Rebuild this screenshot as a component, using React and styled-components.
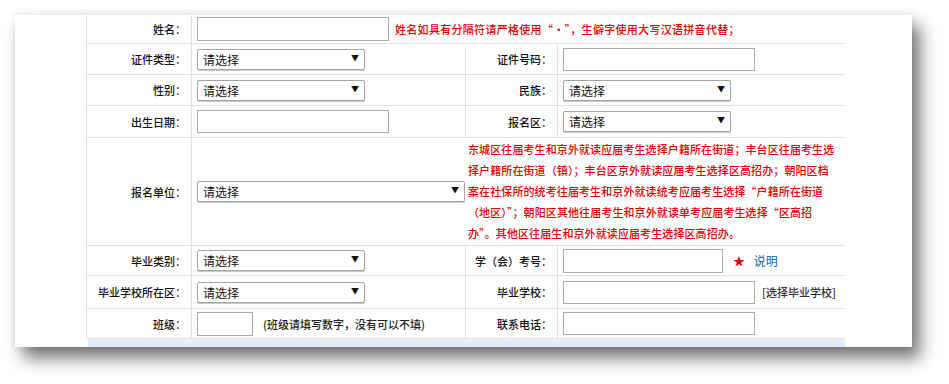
import React from 'react';
import styled, { createGlobalStyle } from 'styled-components';

const Global = createGlobalStyle`
  html, body {
    margin: 0;
    padding: 0;
    background: #ffffff;
  }
  body {
    font-family: "Noto Sans CJK SC", "Liberation Sans", sans-serif;
    color: #222;
  }
  #root {
    padding: 15px 0 40px 15px;
  }
`;

const Card = styled.div`
  width: 897px;
  height: 332px;
  background: #fff;
  box-sizing: border-box;
  padding: 0 67px 0 71px;
  overflow: hidden;
  box-shadow: 8px 11px 16px rgba(0, 0, 0, 0.55), 0 0 8px rgba(0, 0, 0, 0.07);
`;

const Grid = styled.div`
  display: grid;
  grid-template-columns: 105px 274px 92px 288px;
  grid-template-rows: 29px 31px 31px 32px 108px 30px 33px 30px;
`;

const Label = styled.div`
  box-sizing: border-box;
  display: flex;
  align-items: center;
  justify-content: flex-end;
  padding-right: 5px;
  border-left: 1px solid #e2e2e2;
  border-bottom: 1px solid #e2e2e2;
  font-size: 11px;
  font-weight: 500;
  color: #111;
  white-space: nowrap;
`;

const Field = styled.div`
  box-sizing: border-box;
  display: flex;
  align-items: center;
  gap: ${(p) => p.$gap || 6}px;
  padding-left: 5px;
  border-left: 1px solid #e2e2e2;
  border-bottom: 1px solid #e2e2e2;
  grid-column: ${(p) => (p.$span ? `span ${p.$span}` : 'auto')};
  white-space: nowrap;
`;

const NoteCell = styled.div`
  box-sizing: border-box;
  padding: 1px 0 0 3px;
  border-bottom: 1px solid #e2e2e2;
  grid-column: span 2;
  font-size: 11px;
  font-weight: 500;
  line-height: 21px;
  letter-spacing: 0.1px;
  color: #e60000;
  white-space: nowrap;
`;

const TextBox = styled.div`
  box-sizing: border-box;
  width: ${(p) => p.$w}px;
  height: ${(p) => p.$h || 23}px;
  border: 1px solid #aaa;
  background: #fff;
  flex: none;
`;

const Select = styled.div`
  box-sizing: border-box;
  width: ${(p) => p.$w}px;
  height: 21px;
  border: 1px solid #a4a4a4;
  border-radius: 2px;
  box-shadow: 0 1px 0 #c8c8c8;
  background: #fff;
  display: flex;
  align-items: flex-end;
  justify-content: space-between;
  padding: 0 5px 1px 5px;
  font-size: 12px;
  line-height: 16px;
  color: #111;
  flex: none;
`;

const Arrow = styled.span`
  align-self: center;
  font-size: 8px;
  line-height: 8px;
  color: #111;
  margin-top: -2px;
`;

const Hint = styled.span`
  font-size: 11px;
  font-weight: 500;
  letter-spacing: ${(p) => p.$ls || 0}px;
  color: ${(p) => p.$color || '#222'};
`;

const Star = styled.span`
  color: #e60000;
  font-size: 12px;
  margin-left: 4px;
`;

const Link = styled.span`
  color: #1a5c9e;
  font-size: 12px;
`;

const Strip = styled.div`
  height: 8px;
  margin-left: 2px;
  background: linear-gradient(#eaf2fc, #dce9f8);
`;

const SelectBox = ({ w }) => (
  <Select $w={w}>
    <span>请选择</span>
    <Arrow>▼</Arrow>
  </Select>
);

const App = () => {
  return (
    <>
      <Global />
      <Card>
        <Grid>
          <Label>姓名：</Label>
          <Field $span={3}>
            <TextBox $w={192} $h={24} />
            <Hint $color="#e60000" $ls={0.3}>姓名如具有分隔符请严格使用“·”，生僻字使用大写汉语拼音代替；</Hint>
          </Field>

          <Label>证件类型：</Label>
          <Field><SelectBox w={168} /></Field>
          <Label>证件号码：</Label>
          <Field><TextBox $w={192} $h={23} /></Field>

          <Label>性别：</Label>
          <Field><SelectBox w={168} /></Field>
          <Label>民族：</Label>
          <Field><SelectBox w={168} /></Field>

          <Label>出生日期：</Label>
          <Field><TextBox $w={192} $h={23} /></Field>
          <Label>报名区：</Label>
          <Field><SelectBox w={168} /></Field>

          <Label>报名单位：</Label>
          <Field><SelectBox w={268} /></Field>
          <NoteCell>
            东城区往届考生和京外就读应届考生选择户籍所在街道；丰台区往届考生选<br />
            择户籍所在街道（镇）；丰台区京外就读应届考生选择区高招办；朝阳区档<br />
            案在社保所的统考往届考生和京外就读统考应届考生选择“户籍所在街道<br />
            （地区）”；朝阳区其他往届考生和京外就读单考应届考生选择“区高招<br />
            办”。其他区往届生和京外就读应届考生选择区高招办。
          </NoteCell>

          <Label>毕业类别：</Label>
          <Field><SelectBox w={168} /></Field>
          <Label>学（会）考号：</Label>
          <Field $gap={0}>
            <TextBox $w={160} $h={24} />
            <Star>★</Star>
            <Link>&nbsp;说明</Link>
          </Field>

          <Label>毕业学校所在区：</Label>
          <Field><SelectBox w={168} /></Field>
          <Label>毕业学校：</Label>
          <Field $gap={7}>
            <TextBox $w={192} $h={23} />
            <Hint $color="#333">[选择毕业学校]</Hint>
          </Field>

          <Label>班级：</Label>
          <Field $gap={10}>
            <TextBox $w={56} $h={24} />
            <Hint>(班级请填写数字，没有可以不填)</Hint>
          </Field>
          <Label>联系电话：</Label>
          <Field><TextBox $w={192} $h={23} /></Field>
        </Grid>
        <Strip />
      </Card>
    </>
  );
};

export default App;
